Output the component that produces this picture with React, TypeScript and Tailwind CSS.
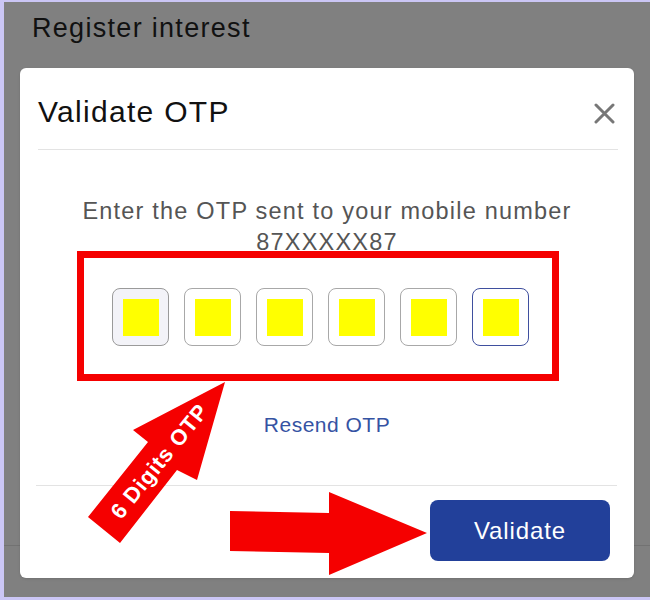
import React from 'react';

const digits = [0, 1, 2, 3, 4, 5];

export default function App() {
  return (
    <div className="w-[650px] h-[600px] bg-[#cbc6f5] pl-[4px] pt-[2px] pb-[3px] font-['Liberation_Sans',Arial,sans-serif]">
      <div className="relative h-full bg-[#808080] flex flex-col">
        {/* page line behind the modal */}
        <div className="absolute left-0 right-0 top-[543px] h-px bg-[#727272]" />

        <div className="h-[66px] pl-[28px] pt-[10px]">
          <h1 className="text-[27px] leading-[32px] tracking-[1.3px] text-[#111]">Register interest</h1>
        </div>

        {/* Modal */}
        <div className="relative ml-[16px] w-[614px] h-[510px] bg-white rounded-[6px] flex flex-col shadow-sm">
          <div className="flex items-start justify-between pl-[18px] pr-[19px] pt-[26px]">
            <h2 className="text-[30px] leading-[36px] tracking-[1.3px] text-[#111]">Validate OTP</h2>
            <button className="mt-[8px] w-[22px] h-[22px] flex items-center justify-center text-[#777]">
              <svg width="21" height="21" viewBox="0 0 21 21">
                <path d="M2 2 L19 19 M19 2 L2 19" stroke="currentColor" strokeWidth="3" strokeLinecap="round" />
              </svg>
            </button>
          </div>
          <div className="mt-[19px] ml-[18px] mr-[16px] h-px bg-[#e3e3e3]" />

          <div className="mt-[46px] text-center text-[23.5px] leading-[31px] tracking-[1.2px] text-[#555]">
            <p>Enter the OTP sent to your mobile number</p>
            <p>87XXXXX87</p>
          </div>

          <div className="mt-[30px] ml-[92px] flex gap-[15px]">
            {digits.map((d) => (
              <div
                key={d}
                className={
                  d === 0
                    ? 'w-[57px] h-[58px] rounded-[8px] border border-[#9a9a9a] bg-[#f3f3f8] flex items-center justify-center'
                    : d === 5
                    ? 'w-[57px] h-[58px] rounded-[8px] border border-[#3f4f9e] bg-white flex items-center justify-center'
                    : 'w-[57px] h-[58px] rounded-[8px] border border-[#a8a8a8] bg-white flex items-center justify-center'
                }
              >
                <div className="w-[36px] h-[37px] bg-[#ffff00]" />
              </div>
            ))}
          </div>

          <div className="mt-[67px] text-center">
            <a className="text-[21px] leading-[24px] tracking-[0.5px] text-[#3553a3]">Resend OTP</a>
          </div>

          <div className="mt-[46px] ml-[16px] mr-[17px] h-px bg-[#e3e3e3]" />

          <div className="flex justify-end pr-[24px] pt-[14px]">
            <button className="w-[180px] h-[61px] rounded-[8px] bg-[#22409a] text-white text-[24px] tracking-[0.9px]">
              Validate
            </button>
          </div>
        </div>

        {/* annotation: red frame */}
        <div className="absolute left-[73px] top-[249px] w-[482px] h-[130px] border-[7px] border-[#f50000]" />

        {/* annotation: arrows */}
        <svg className="absolute left-[-4px] top-[-2px] pointer-events-none" width="650" height="600" viewBox="0 0 650 600">
          <polygon points="225,382 197,480 177,470 120,543 88,517 148,442 133,430" fill="#f50000" />
          <polygon points="230,511 329,513 329,492 427,533 329,575 329,553 230,551" fill="#f50000" />
          <text
            x="159"
            y="469"
            fill="#fff"
            fontSize="22"
            fontWeight="700"
            letterSpacing="0.8"
            fontFamily="'Liberation Sans', Arial, sans-serif"
            textAnchor="middle"
            transform="rotate(-51 159 461)"
          >
            6 Digits OTP
          </text>
        </svg>
      </div>
    </div>
  );
}
